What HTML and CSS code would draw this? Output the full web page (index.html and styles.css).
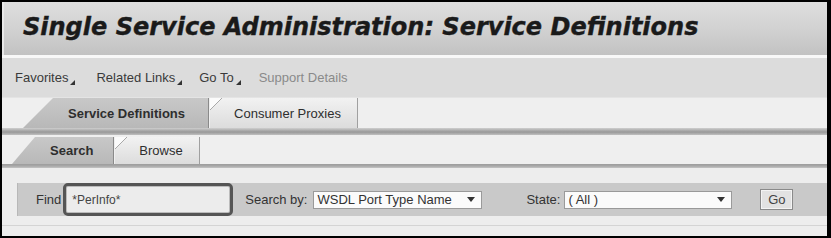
FILE: index.html
```html
<!DOCTYPE html>
<html>
<head>
<meta charset="utf-8">
<link rel="stylesheet" href="styles.css">
</head>
<body>
<div class="frame">
  <header class="titlebar"><h1 class="title">Single Service Administration: Service Definitions</h1></header>
  <div class="sep"></div>
  <nav class="nav">
    <span class="menu m-fav">Favorites<i class="tri"></i></span>
    <span class="menu m-rel">Related Links<i class="tri"></i></span>
    <span class="menu m-go">Go To<i class="tri"></i></span>
    <span class="menu muted">Support Details</span>
  </nav>
  <div class="tabstrip tabs1">
    <div class="tab active">Service Definitions</div>
    <div class="tab inactive">Consumer Proxies</div>
  </div>
  <div class="band band1"></div>
  <div class="tabstrip tabs2">
    <div class="tab active">Search</div>
    <div class="tab inactive">Browse</div>
  </div>
  <div class="band band2"></div>
  <div class="content">
    <div class="panel">
      <span class="lbl lbl-find">Find</span>
      <div class="findbox"><span class="findval">*PerInfo*</span></div>
      <span class="lbl lbl-by">Search by:</span>
      <div class="select sel1"><span>WSDL Port Type Name</span><i class="arrow"></i></div>
      <span class="lbl lbl-state">State:</span>
      <div class="select sel2"><span>( All )</span><i class="arrow"></i></div>
      <div class="btn">Go</div>
    </div>
    <div class="rule"></div>
  </div>
</div>
</body>
</html>
```

FILE: styles.css
```css
html, body {
  margin: 0;
  padding: 0;
  background: #000;
}
body {
  width: 831px;
  height: 238px;
  overflow: hidden;
}
.frame {
  margin: 2px 4px 2px 2px;
  width: 825px;
  height: 234px;
  background: #ececec;
  display: flex;
  flex-direction: column;
  font-family: "Liberation Sans", Arial, sans-serif;
  color: #333;
  overflow: hidden;
}
.titlebar {
  height: 53px;
  flex: none;
  background: linear-gradient(#dedede, #d2d2d2 50%, #c2c2c2);
  border-left: 2px solid #e8e8e8;
  display: flex;
  align-items: center;
  padding-left: 19px;
  padding-bottom: 3px;
  box-sizing: border-box;
}
.title {
  margin: 0;
  font-family: "DejaVu Sans", Verdana, sans-serif;
  font-weight: bold;
  font-style: italic;
  font-size: 24px;
  color: #1a1a1a;
  white-space: nowrap;
  -webkit-text-stroke: 0.4px #1a1a1a;
}
.sep {
  height: 3px;
  flex: none;
  background: #f8f8f8;
}
.nav {
  height: 39px;
  flex: none;
  background: #dcdcdc;
  display: flex;
  align-items: center;
  padding-left: 13px;
  font-size: 13px;
  box-sizing: border-box;
}
.menu {
  color: #3a3a3a;
  display: inline-flex;
  align-items: flex-end;
  white-space: nowrap;
}
.m-fav { margin-right: 21px; }
.m-rel { margin-right: 17px; }
.m-go { margin-right: 18px; }
.menu.muted {
  color: #8a8a8a;
}
.tri {
  display: inline-block;
  width: 0;
  height: 0;
  border-left: 5px solid transparent;
  border-bottom: 5px solid #333;
  margin-left: 2px;
}
.tabstrip {
  flex: none;
  background: #efefef;
  display: flex;
  align-items: flex-end;
  font-size: 13px;
  box-sizing: border-box;
}
.tabs1 {
  height: 31px;
  border-top: 1px solid #e4e4e4;
}
.tabs2 {
  height: 29px;
}
.tab {
  display: flex;
  align-items: center;
  box-sizing: border-box;
  color: #2e2e2e;
  white-space: nowrap;
}
.tab.active {
  font-weight: bold;
  background: linear-gradient(#c8c8c8, #b8b8b8);
  border-right: 1px solid #8a8a8a;
}
.tab.inactive {
  background:
    linear-gradient(135deg, #fbfbfb 0 8px, #a8a8a8 8px 9px, transparent 9px),
    linear-gradient(#f2f2f2, #dcdcdc);
  border-right: 1px solid #a0a0a0;
}
.tabs1 .tab {
  height: 30px;
}
.tabs1 .tab.active {
  margin-left: 21px;
  width: 186px;
  padding-left: 45px;
  clip-path: polygon(30px 0, 100% 0, 100% 100%, 0 100%);
}
.tabs1 .tab.inactive {
  margin-left: 1px;
  width: 148px;
  justify-content: center;
  padding-left: 8px;
}
.tabs2 .tab {
  height: 27px;
}
.tabs2 .tab.active {
  margin-left: 10px;
  width: 102px;
  padding-left: 38px;
  clip-path: polygon(23px 0, 100% 0, 100% 100%, 0 100%);
}
.tabs2 .tab.inactive {
  margin-left: 1px;
  width: 85px;
  justify-content: center;
  padding-left: 8px;
}
.band {
  flex: none;
}
.band1 {
  height: 7px;
  background: linear-gradient(#cfcfcf, #a2a2a2 45%, #9a9a9a 60%, #c0c0c0);
}
.band2 {
  height: 4px;
  background: linear-gradient(#9c9c9c, #a8a8a8, #c4c4c4);
}
.content {
  flex: 1;
  padding-top: 15px;
  display: flex;
  flex-direction: column;
  background: #ededed;
}
.panel {
  margin-left: 15px;
  height: 33px;
  background: #c9c9c9;
  border-left: 1px solid #b8b8b8;
  display: flex;
  align-items: center;
  font-size: 13px;
  box-sizing: border-box;
}
.lbl {
  color: #333;
  white-space: nowrap;
}
.lbl-find {
  margin-left: 18px;
}
.findbox {
  margin-left: 2px;
  width: 170px;
  height: 33px;
  box-sizing: border-box;
  border: 3px solid #555;
  border-radius: 5px;
  background: #ececec;
  display: flex;
  align-items: center;
  padding-left: 6px;
  box-shadow: inset 0 0 0 1px #bbb;
}
.findval {
  color: #444;
  font-size: 12px;
}
.lbl-by {
  margin-left: 12px;
}
.select {
  height: 18px;
  box-sizing: border-box;
  background: #fbfbfb;
  border: 1px solid #9a9a9a;
  display: flex;
  align-items: center;
  justify-content: space-between;
  padding: 0 6px 0 3px;
  color: #333;
  white-space: nowrap;
}
.sel1 {
  margin-left: 6px;
  width: 169px;
}
.lbl-state {
  margin-left: 44px;
}
.sel2 {
  margin-left: 4px;
  width: 168px;
}
.arrow {
  display: inline-block;
  width: 0;
  height: 0;
  border-left: 4px solid transparent;
  border-right: 4px solid transparent;
  border-top: 5px solid #333;
}
.btn {
  margin-left: 28px;
  width: 33px;
  height: 21px;
  box-sizing: border-box;
  border: 1px solid #8a8a8a;
  box-shadow: inset 0 0 0 1px #f4f4f4;
  background: #e2e2e2;
  display: flex;
  align-items: center;
  justify-content: center;
  color: #444;
}
.rule {
  margin-top: 9px;
  height: 1px;
  background: #d4d4d4;
}
```
